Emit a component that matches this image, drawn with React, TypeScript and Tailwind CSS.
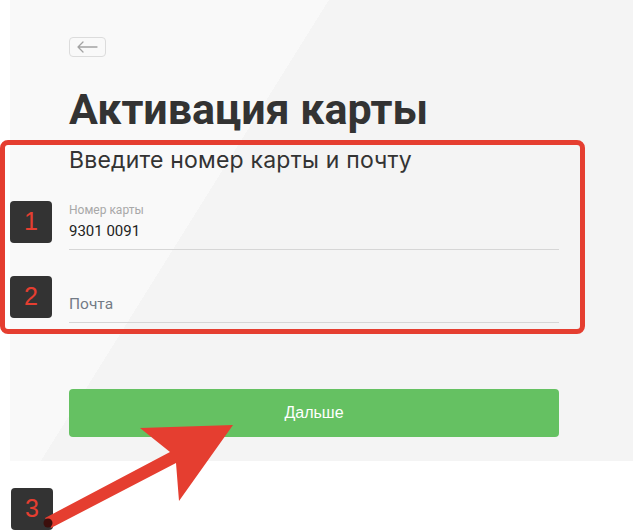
function BackButton() {
  return (
    <button
      type="button"
      aria-label="Назад"
      className="flex h-[20px] w-[37px] items-center justify-center rounded-[4px] border border-[#dcdcdc]"
    >
      <svg width="21" height="12" viewBox="0 0 21 12" fill="none" aria-hidden="true">
        <path d="M1 6h19M6 1 1 6l5 5" stroke="#a3a3a3" strokeWidth="1.3" strokeLinecap="round" strokeLinejoin="round" />
      </svg>
    </button>
  );
}

function Field({ label, value, placeholder }: { label?: string; value?: string; placeholder?: string }) {
  return (
    <div className="flex flex-col gap-[4px] border-b border-[#d6d6d6] pb-[8px] font-[Roboto,sans-serif]">
      <div className="h-[14px] text-[12px] leading-[14px] text-[#a8a8a8]">{label}</div>
      {value ? (
        <div className="text-[15px] leading-[20px] text-[#222]">{value}</div>
      ) : (
        <div className="text-[15.5px] leading-[20px] text-[#737b86]">{placeholder}</div>
      )}
    </div>
  );
}

function Marker({ n, className }: { n: number; className: string }) {
  return (
    <div
      className={`absolute flex h-[42px] w-[42px] items-center justify-center rounded-[4px] bg-[#333] font-['Liberation_Sans',sans-serif] text-[25px] font-light text-[#e53e30] ${className}`}
    >
      {n}
    </div>
  );
}

export default function App() {
  return (
    <div className="relative h-[530px] w-[633px] overflow-hidden bg-white">
      <div className="ml-[10px] flex h-[461px] flex-col items-start bg-[linear-gradient(122deg,#f9f9f9_35%,#f4f4f4_35%)] pl-[59px] pr-[74px] pt-[37px]">
        <BackButton />
        <h1 className="mt-[31px] font-[Roboto,sans-serif] text-[43px] font-bold leading-[43px] text-[#333]">
          Активация карты
        </h1>
        <p className="mt-[15px] font-[Inter,sans-serif] text-[23px] leading-[28px] tracking-[0.2px] text-[#333]">
          Введите номер карты и почту
        </p>
        <div className="mt-[29px] flex w-full flex-col gap-[26px]">
          <Field label="Номер карты" value="9301 0091" />
          <Field placeholder="Почта" />
        </div>
        <button
          type="button"
          className="mt-[66px] flex h-[48px] w-full items-center justify-center rounded-[4px] bg-[#65c162] font-['Liberation_Sans',sans-serif] text-[16px] text-white"
        >
          Дальше
        </button>
      </div>

      {/* annotations */}
      <div className="absolute left-0 top-[140px] h-[194px] w-[585px] rounded-[8px] border-[5px] border-[#e53e30]" />
      <Marker n={1} className="left-[10px] top-[201px]" />
      <Marker n={2} className="left-[10px] top-[276px]" />
      <Marker n={3} className="left-[11px] top-[488px]" />
      <svg className="absolute left-0 top-0" width="633" height="530" viewBox="0 0 633 530" aria-hidden="true">
        <polygon points="45,518 170,452 140,428 233,425 179,501 176,463 51,528" fill="#e53e30" />
        <circle cx="48" cy="523" r="4.5" fill="#3c0f0c" />
      </svg>
    </div>
  );
}
